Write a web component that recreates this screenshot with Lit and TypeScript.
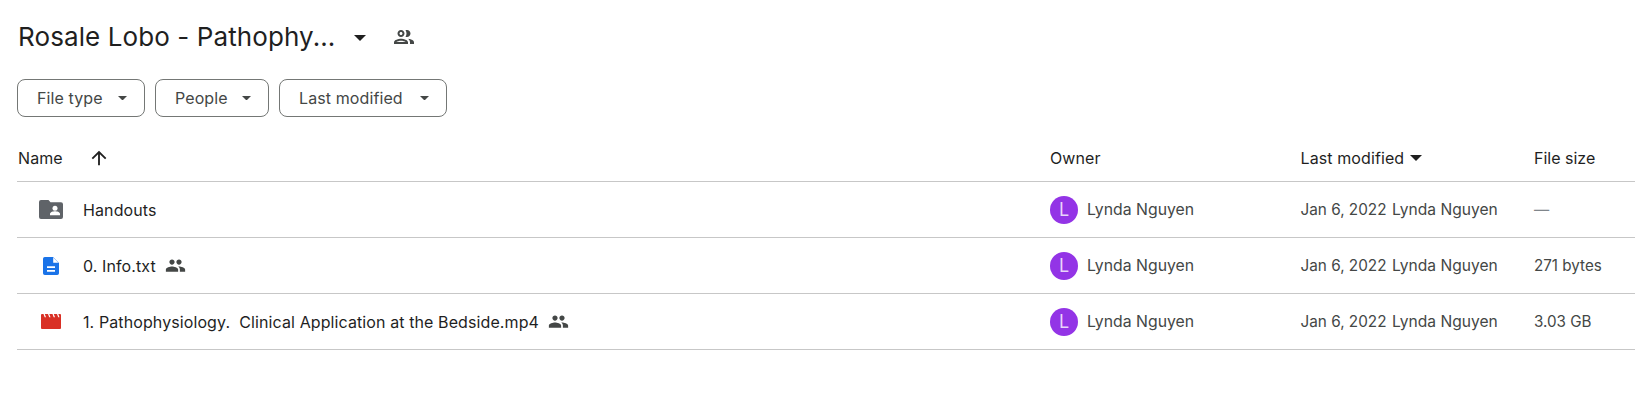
import { LitElement, html, css } from "lit";
import { customElement } from "lit/decorators.js";

const caret = (cls: string) => html`<svg class=${cls} viewBox="0 0 10 5"><path d="M0 0h10L5 5z" fill="currentColor"/></svg>`;
const people = html`<svg class="shared" viewBox="0 0 24 24"><path fill="currentColor" d="M16 11c1.66 0 2.99-1.34 2.99-3S17.66 5 16 5s-3 1.34-3 3 1.34 3 3 3zm-8 0c1.66 0 2.99-1.34 2.99-3S9.66 5 8 5 5 6.34 5 8s1.34 3 3 3zm0 2c-2.33 0-7 1.17-7 3.5V19h14v-2.500C15 14.170 10.330 13 8 13zm8 0c-.29 0-.62.02-.97.05 1.160.84 1.970 1.970 1.970 3.450V19h6v-2.500c0-2.330-4.670-3.500-7-3.500z"/></svg>`;
const folder = html`<svg class="ficon" viewBox="0 0 24 19" style="color:#5f6368"><path fill="currentColor" d="M2 0h7.500l2 2.200H22a2 2 0 0 1 2 2V17a2 2 0 0 1-2 2H2a2 2 0 0 1-2-2V2a2 2 0 0 1 2-2z"/><circle cx="16" cy="8.200" r="2.500" fill="#fff"/><path fill="#fff" d="M11 15.200v-1.400c0-1.700 3.300-2.500 5-2.500s5 .8 5 2.500v1.400z"/></svg>`;
const doc = html`<svg class="ficon" viewBox="0 0 16 18" style="color:#1a73e8"><path fill="currentColor" d="M1.800 0H10l6 6v10.200a1.800 1.800 0 0 1-1.800 1.800H1.800A1.800 1.800 0 0 1 0 16.200V1.800A1.800 1.800 0 0 1 1.800 0z"/><path fill="#fff" d="M10.200 .6l5.200 5.200h-5.200zM4 9.300h8v1.700H4zM4 13h8v1.700H4z"/></svg>`;
const video = html`<svg class="ficon" viewBox="0 0 20 15" style="color:#d93025"><path fill="currentColor" d="M1 0h18a1 1 0 0 1 1 1v13a1 1 0 0 1-1 1H1a1 1 0 0 1-1-1V1a1 1 0 0 1 1-1z"/><path fill="#fff" d="M2.500 0h1.300l1.200 3.200H3.700zM7 0h1.300l1.200 3.200H8.200zM11.500 0h1.300L14 3.200h-1.300zM16 0h1.300l1.200 3.200h-1.300z"/></svg>`;

const rows = [
  { icon: folder, w: 24, h: 19, name: "Handouts", shared: false, size: "—", dash: true },
  { icon: doc, w: 16, h: 18, name: "0. Info.txt", shared: true, size: "271 bytes", dash: false },
  { icon: video, w: 20, h: 15, name: "1. Pathophysiology.\u00a0 Clinical Application at the Bedside.mp4", shared: true, size: "3.03 GB", dash: false },
];

@customElement("app-root")
export class AppRoot extends LitElement {
  static styles = css`
    :host { display: block; width: 1635px; height: 405px; background: #fff; overflow: hidden; font-family: Inter, Roboto, sans-serif; color: #1f1f1f; font-size: 16px; }
    .head { display: flex; align-items: center; height: 30px; padding: 22px 0 0 18px; }
    h1 { margin: 0; width: 336px; font-size: 26px; font-weight: 400; line-height: 30px; letter-spacing: 0.1px; white-space: nowrap; }
    .tcaret { width: 12px; height: 6px; margin-top: 1px; color: #1f1f1f; }
    .hpeople { width: 24px; height: 24px; margin-left: 26px; color: #444746; display: block; }
    .chips { display: flex; gap: 10px; margin: 27px 0 0 17px; }
    .chip { box-sizing: border-box; height: 38px; border: 1px solid #747775; border-radius: 8px; display: flex; align-items: center; color: #444746; padding-left: 19px; letter-spacing: 0.1px; }
    .chip span { flex: 1; white-space: nowrap; }
    .ccaret { width: 9px; height: 4.500px; margin-right: 17px; color: #444746; }
    .grid { margin-top: 19px; margin-left: 17px; width: 1618px; }
    .row { display: grid; grid-template-columns: 1033px 250.500px 233.500px 1fr; align-items: center; box-sizing: border-box; height: 56px; border-bottom: 1px solid #c7c7c7; }
    .hrow { height: 46px; padding-bottom: 2px; letter-spacing: 0.1px; }
    .hrow > div { display: flex; align-items: center; }
    .hname { padding-left: 1px; }
    .arrow { width: 22px; height: 22px; margin-left: 25px; }
    .scaret { width: 12px; height: 6px; margin-left: 6px; }
    .size-head { letter-spacing: 0; }
    .name { display: flex; align-items: center; white-space: nowrap; letter-spacing: 0.1px; }
    .iconbox { width: 66px; display: flex; justify-content: center; padding-left: 2px; box-sizing: border-box; }
    .ficon { display: block; }
    .shared { width: 21px; height: 21px; margin-left: 9px; color: #444746; display: block; }
    .owner { display: flex; align-items: center; gap: 9px; color: #444746; font-size: 15.800px; white-space: nowrap; }
    .avatar { width: 28px; height: 28px; border-radius: 50%; background: #9334e6; color: #e8d5fa; display: flex; align-items: center; justify-content: center; font-size: 18px; }
    .mod { display: flex; color: #444746; font-size: 15.600px; white-space: nowrap; }
    .date { width: 91.500px; font-size: 15.300px; }
    .size { color: #444746; font-size: 15.200px; white-space: nowrap; }
    .dash { color: #80868b; }
  `;

  render() {
    return html`
      <div class="head">
        <h1>Rosale Lobo - Pathophy...</h1>
        ${caret("tcaret")}
        <svg class="hpeople" viewBox="0 0 24 24"><path fill="currentColor" d="M9 13.750c-2.340 0-7 1.170-7 3.500V19h14v-1.750c0-2.330-4.660-3.500-7-3.500zM4.340 17c.84-.58 2.870-1.250 4.660-1.250s3.820.67 4.660 1.250H4.340zM9 12c1.930 0 3.500-1.570 3.500-3.500S10.930 5 9 5 5.500 6.570 5.500 8.500 7.070 12 9 12zm0-5c.83 0 1.500.67 1.500 1.500S9.830 10 9 10s-1.500-.67-1.500-1.500S8.170 7 9 7zm7.040 6.810c1.160.84 1.960 1.960 1.960 3.440V19h4v-1.750c0-2.020-3.500-3.170-5.960-3.440zM15 12c1.930 0 3.500-1.570 3.500-3.500S16.930 5 15 5c-.54 0-1.040.13-1.500.35.63.89 1 1.980 1 3.150s-.37 2.260-1 3.150c.46.220.96.350 1.500.350z"/></svg>
      </div>
      <div class="chips">
        <div class="chip" style="width:128px"><span>File type</span>${caret("ccaret")}</div>
        <div class="chip" style="width:114px"><span>People</span>${caret("ccaret")}</div>
        <div class="chip" style="width:168px"><span>Last modified</span>${caret("ccaret")}</div>
      </div>
      <div class="grid">
        <div class="row hrow">
          <div class="hname">Name
            <svg class="arrow" viewBox="0 0 24 24"><path fill="currentColor" d="M11 20V7.830l-5.590 5.590L4 12l8-8 8 8-1.410 1.410L13 7.830V20z"/></svg>
          </div>
          <div>Owner</div>
          <div>Last modified ${caret("scaret")}</div>
          <div class="size-head">File size</div>
        </div>
        ${rows.map((r) => html`
          <div class="row">
            <div class="name">
              <div class="iconbox"><span style="width:${r.w}px;height:${r.h}px;display:block">${r.icon}</span></div>
              ${r.name}${r.shared ? people : ""}
            </div>
            <div class="owner"><div class="avatar">L</div>Lynda Nguyen</div>
            <div class="mod"><span class="date">Jan 6, 2022</span><span>Lynda Nguyen</span></div>
            <div class="size ${r.dash ? "dash" : ""}">${r.size}</div>
          </div>
        `)}
      </div>
    `;
  }
}
